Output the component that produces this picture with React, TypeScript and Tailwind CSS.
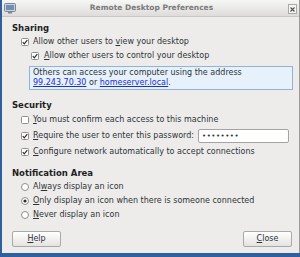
import React from "react";

const font = { fontFamily: '"DejaVu Sans", "Liberation Sans", sans-serif' };

function Check({ checked }: { checked: boolean }) {
  return (
    <svg width="8" height="8" viewBox="0 0 8 8" className="shrink-0">
      <rect x="0.5" y="0.5" width="7" height="7" rx="1" fill="#ffffff" stroke="#8e8e8e" />
      {checked && <path d="M1.8 4.2 L3.3 5.8 L6.3 2.2" fill="none" stroke="#2e2e2e" strokeWidth="1.2" />}
    </svg>
  );
}

function Radio({ checked }: { checked: boolean }) {
  return (
    <svg width="8" height="8" viewBox="0 0 8 8" className="shrink-0">
      <circle cx="4" cy="4" r="3.5" fill="#ffffff" stroke="#8e8e8e" />
      {checked && <circle cx="4" cy="4" r="1.6" fill="#2e2e2e" />}
    </svg>
  );
}

function U({ children }: { children: React.ReactNode }) {
  return <span className="underline underline-offset-[1px]">{children}</span>;
}

export default function App() {
  return (
    <div className="w-[300px] h-[257px] bg-[#2f5f9c] flex pl-[2px] pr-[4px] pb-[4px] overflow-hidden" style={font}>
      <div className="flex-1 flex flex-col bg-[#edeceb] border-r border-[#9a9a98] text-[8px] text-[#2e3436] leading-none">
        {/* Title bar */}
        <div className="relative h-[17px] flex items-center justify-center bg-gradient-to-b from-[#f7f7f6] to-[#dddcda] border-b border-[#c8c7c5]">
          <div className="absolute left-[2px] top-[3px]">
            <svg width="12" height="11" viewBox="0 0 12 11">
              <rect x="0.5" y="0.5" width="11" height="8" rx="1" fill="#c9d3de" stroke="#7d8793" />
              <rect x="2" y="2" width="8" height="5" fill="#6f8fb8" />
              <rect x="4" y="9" width="4" height="1.5" fill="#7d8793" />
            </svg>
          </div>
          <span className="font-bold text-[#7a7a7a] text-[7.5px] pl-[2px]">Remote Desktop Preferences</span>
          <div className="absolute right-[2px] top-[4px] w-[9px] h-[10px] border border-[#a9a9a7] bg-[#f5f5f4] flex items-center justify-center">
            <svg width="5" height="5" viewBox="0 0 5 5">
              <path d="M0.5 0.5 L4.5 4.5 M4.5 0.5 L0.5 4.5" stroke="#555" strokeWidth="1.2" />
            </svg>
          </div>
        </div>

        {/* Content */}
        <div className="flex flex-col pl-[10px] pr-[6px] pt-[4px]">
          <div className="h-[14px] flex items-center font-bold text-[#1e1e1e] text-[8.5px]">Sharing</div>
          <div className="h-[14px] flex items-center gap-[4px] pl-[9px]">
            <Check checked />
            <span>Allow other users to <U>v</U>iew your desktop</span>
          </div>
          <div className="h-[14px] flex items-center gap-[5px] pl-[19px]">
            <Check checked />
            <span><U>A</U>llow other users to control your desktop</span>
          </div>
          <div className="mt-[3px] ml-[17px] h-[24px] border border-[#8fb3de] bg-[#e6f1fc] flex flex-col justify-center gap-[2px] pl-[3px]">
            <span>Others can access your computer using the address</span>
            <span>
              <span className="text-[#1a2fd6] underline">99.243.70.30</span> or{" "}
              <span className="text-[#1a2fd6] underline">homeserver.local</span>.
            </span>
          </div>

          <div className="mt-[8px] h-[14px] flex items-center font-bold text-[#1e1e1e] text-[8.5px]">Security</div>
          <div className="h-[16px] flex items-center gap-[4px] pl-[9px]">
            <Check checked={false} />
            <span><U>Y</U>ou must confirm each access to this machine</span>
          </div>
          <div className="h-[16px] flex items-center gap-[4px] pl-[9px]">
            <Check checked />
            <span className="whitespace-nowrap"><U>R</U>equire the user to enter this password:</span>
            <div className="ml-auto mr-[4px] shrink-0 w-[91px] h-[14px] bg-white border border-[#a4a4a2] rounded-[2px] flex items-center pl-[3px] text-[7px] tracking-[0.5px]">
              ••••••••
            </div>
          </div>
          <div className="h-[16px] flex items-center gap-[4px] pl-[9px]">
            <Check checked />
            <span><U>C</U>onfigure network automatically to accept connections</span>
          </div>

          <div className="mt-[7px] h-[13px] flex items-center font-bold text-[#1e1e1e] text-[8.5px]">Notification Area</div>
          <div className="h-[14px] flex items-center gap-[4px] pl-[9px]">
            <Radio checked={false} />
            <span>Al<U>w</U>ays display an icon</span>
          </div>
          <div className="h-[14px] flex items-center gap-[4px] pl-[9px]">
            <Radio checked />
            <span><U>O</U>nly display an icon when there is someone connected</span>
          </div>
          <div className="h-[14px] flex items-center gap-[4px] pl-[9px]">
            <Radio checked={false} />
            <span><U>N</U>ever display an icon</span>
          </div>

          <div className="mt-[9px] flex justify-between pr-[1px]">
            <button className="w-[49px] h-[16px] border border-[#a9a9a7] rounded-[2px] bg-gradient-to-b from-[#ffffff] to-[#e4e3e1] flex items-center justify-center text-[8px] text-[#2e3436]">
              <span><U>H</U>elp</span>
            </button>
            <button className="w-[49px] h-[16px] border border-[#a9a9a7] rounded-[2px] bg-gradient-to-b from-[#ffffff] to-[#e4e3e1] flex items-center justify-center text-[8px] text-[#2e3436]">
              <span><U>C</U>lose</span>
            </button>
          </div>
        </div>
      </div>
    </div>
  );
}
